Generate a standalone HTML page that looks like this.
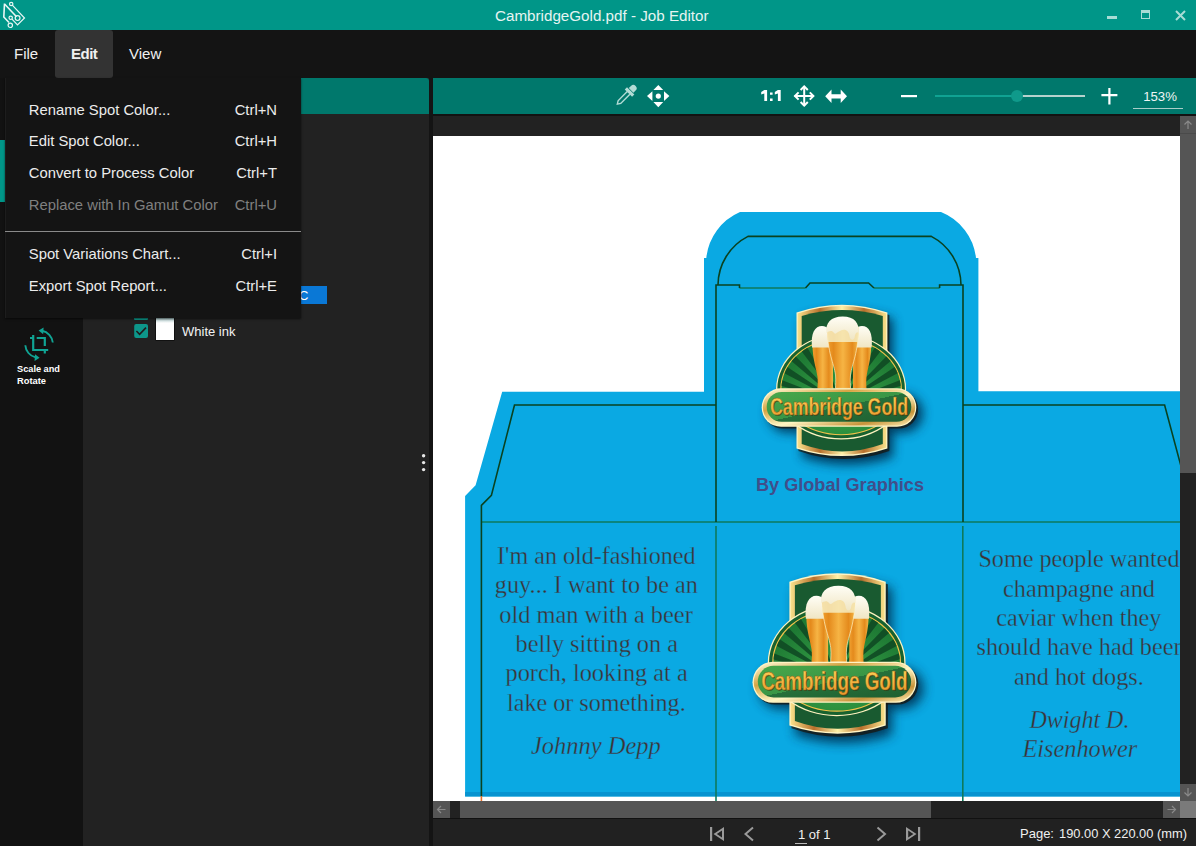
<!DOCTYPE html>
<html><head><meta charset="utf-8">
<style>
*{margin:0;padding:0;box-sizing:border-box}
html,body{width:1196px;height:846px;overflow:hidden;background:#141414;font-family:"Liberation Sans",sans-serif}
.a{position:absolute}
#title{left:0;top:0;width:1196px;height:30px;background:#009688}
#ttext{left:495px;top:0.7px;white-space:nowrap;color:#e6f4f2;font-size:15.2px;line-height:30px}
#menubar{left:0;top:30px;width:1196px;height:48px;background:#141414}
.mi{color:#f0f0f0;font-size:15px;top:30px;line-height:47px}
#editbtn{left:55px;top:30px;width:58px;height:48px;background:#333;border-radius:3px}
#rail{left:0;top:78px;width:83px;height:768px;background:#121212}
#panel{left:83px;top:78px;width:346px;height:768px;background:#222}
#phead{left:83px;top:78px;width:346px;height:36px;background:#00786c;border-top-right-radius:3px}
#divider{left:429px;top:78px;width:4px;height:768px;background:#141414}
#tbar{left:433px;top:78px;width:763px;height:36px;background:#00786c}
#canvas{left:433px;top:114px;width:763px;height:704px;background:#222;border-top:2px solid #121212}
#status{left:433px;top:818px;width:763px;height:28px;background:#212121;border-top:1px solid #111}
#page{left:433px;top:136px;width:747px;height:665px;background:#fff;overflow:hidden}
#dd{left:5px;top:78px;width:296px;height:240px;background:#141414;border-left:1px solid #1d1d1d;box-shadow:0 1px 2px rgba(0,0,0,.6)}
.it{left:22.8px;font-size:14.8px;line-height:17px;color:#ececec;white-space:nowrap}
.sc{right:24px;font-size:14.8px;line-height:17px;color:#ececec;white-space:nowrap}
.dis{color:#808080}
</style></head><body>
<div class="a" id="title"></div>
<div class="a" id="ttext">CambridgeGold.pdf - Job Editor</div>
<div class="a" id="menubar"></div>
<div class="a" id="editbtn"></div>
<div class="a mi" style="left:14px">File</div>
<div class="a mi" style="left:71px;font-weight:bold;letter-spacing:-0.5px">Edit</div>
<div class="a mi" style="left:129px">View</div>
<div class="a" id="rail"></div>
<div class="a" style="left:0;top:140px;width:5px;height:62px;background:#009688"></div>
<div class="a" id="panel"></div>
<div class="a" id="phead"></div>
<div class="a" id="divider"></div>
<div class="a" id="tbar"></div>
<div class="a" id="canvas"></div>

<svg class="a" style="left:433px;top:136px" width="747" height="665" viewBox="433 136 747 665">
  <defs>
    <linearGradient id="gold" x1="0" y1="0" x2="1" y2="1">
      <stop offset="0" stop-color="#fffbd8"/><stop offset="0.3" stop-color="#d7a443"/><stop offset="0.55" stop-color="#fff6c4"/><stop offset="0.8" stop-color="#c8943a"/><stop offset="1" stop-color="#fff0b8"/>
    </linearGradient>
    <linearGradient id="bgreen" x1="0" y1="0" x2="1" y2="1">
      <stop offset="0" stop-color="#48a84a"/><stop offset="0.5" stop-color="#3a9646"/><stop offset="0.5" stop-color="#26703a"/><stop offset="1" stop-color="#1f5e30"/>
    </linearGradient>
    <linearGradient id="beer" x1="0" y1="0" x2="1" y2="0">
      <stop offset="0" stop-color="#f0a030"/><stop offset="0.2" stop-color="#e48a1c"/><stop offset="0.5" stop-color="#f6b444"/><stop offset="0.8" stop-color="#e48a1c"/><stop offset="1" stop-color="#f4b848"/>
    </linearGradient>
    <linearGradient id="foam" x1="0" y1="0" x2="0" y2="1">
      <stop offset="0" stop-color="#fffef6"/><stop offset="1" stop-color="#f0e6c4"/>
    </linearGradient>
    <linearGradient id="fgold" x1="0" y1="0" x2="1" y2="0"><stop offset="0" stop-color="#f8e08a"/><stop offset="0.25" stop-color="#b8702c"/><stop offset="0.5" stop-color="#fff2a8"/><stop offset="0.75" stop-color="#b8702c"/><stop offset="1" stop-color="#f8e08a"/></linearGradient>
    <linearGradient id="tgold" x1="0" y1="0" x2="0" y2="1"><stop offset="0" stop-color="#ffd45a"/><stop offset="1" stop-color="#e8962a"/></linearGradient>
    <radialGradient id="rays" cx="0.5" cy="0.7" r="0.6">
      <stop offset="0" stop-color="#3aa548"/><stop offset="1" stop-color="#1e7a34"/>
    </radialGradient>
    <filter id="blur" x="-30%" y="-30%" width="160%" height="160%"><feGaussianBlur stdDeviation="5.5"/></filter>
    <clipPath id="ellc"><ellipse cx="86.1" cy="94" rx="62" ry="41.7"/></clipPath>
    <symbol id="logo" overflow="visible">
      <g filter="url(#blur)" fill="#023456" opacity="0.95">
        <path d="M47,24 Q92,9 138,24 V162 Q92,177 47,162 Z"/>
        <rect x="13" y="99" width="154.8" height="38.6" rx="19.3"/>
      </g>
      <path d="M43.5,20 Q88.8,6.5 134.4,20 V156 Q88.8,172 43.5,156 Z" fill="#1a1208" opacity="0.7"/>
      <rect x="8.5" y="95" width="154.6" height="38.6" rx="19.3" fill="#1a1208" opacity="0.7"/>
      <path d="M41.5,17.6 Q86.8,1.8 132.4,17.6 V153.4 Q86.8,168.6 41.5,153.4 Z" fill="#fff4c4"/>
      <path d="M42.7,18.6 Q86.8,3.6 131.2,18.6 V152.4 Q86.8,166.8 42.7,152.4 Z" fill="url(#fgold)"/>
      <path d="M46.7,21 Q87,9.2 127.8,21 V149 Q87,163.8 46.7,149 Z" fill="#195a30"/>
      <path d="M21.10,94 A65.00 55.00 0 0 1 151.10,94 A65.00 50.50 0 0 1 21.10,94 Z" fill="#fff3c0"/>
      <path d="M22.30,94 A63.80 53.80 0 0 1 149.90,94 A63.80 49.30 0 0 1 22.30,94 Z" fill="#17622f"/>
      <path d="M25.30,94 A60.80 50.80 0 0 1 146.90,94 A60.80 46.30 0 0 1 25.30,94 Z" fill="#f2c24a"/>
      <path d="M26.40,94 A59.70 49.70 0 0 1 145.80,94 A59.70 45.20 0 0 1 26.40,94 Z" fill="url(#rays)"/>
      <clipPath id="ellc2"><path d="M26.40,94 A59.70 49.70 0 0 1 145.80,94 A59.70 45.20 0 0 1 26.40,94 Z"/></clipPath>
      <g clip-path="url(#ellc2)" fill="#0f4a24" opacity="0.9">
        <path d="M86,108 L6,66 L10,57z M86,108 L14,47 L20,40z M86,108 L28,32 L36,26z M86,108 L44,20 L53,17z M86,108 L119,17 L128,20z M86,108 L136,26 L144,32z M86,108 L152,40 L158,47z M86,108 L162,57 L166,66z M86,108 L2,84 L3,76z M86,108 L169,76 L170,84z"/>
      </g>
      <g>
        <path d="M57.5,50 C57.5,64 61.5,74 62.5,82 C63,88 62.5,91 62.5,93.4 H78 V50 Z" fill="url(#beer)"/>
        <path d="M57,52.5 C55.5,38 60,31 67,31 C73,31 77,36 77,45 L77,52.5 Z" fill="url(#foam)"/>
        <path d="M98,50 H116.2 C116.2,64 112.5,74 111.5,82 C111,88 111.5,91 111.5,93.4 H98 Z" fill="url(#beer)"/>
        <path d="M98,45 C98,36 101,31 107,31 C114,31 118,38 116.6,52.5 H98 Z" fill="url(#foam)"/>
        <path d="M72.3,32 C72.3,58 79,68 80.5,80 C81,86 80.5,90 80.5,93.4 H95.5 C95.5,90 95,86 95.5,80 C97,68 103.5,58 103.5,32 Z" fill="url(#beer)" stroke="#fff4c8" stroke-width="0.8" stroke-opacity="0.8"/>
        <path d="M72.6,32 H103.2 V47 H72.6z" fill="#f6ecc0" opacity="0.85"/>
        <path d="M71.5,38 C70,28 76,21.4 87.7,21.4 C99.5,21.4 104.5,28 103.8,38 C102,36 100,38 99.5,43 C98,46 95,45 94.5,41 C94,36 90,33 85,36 C82,37 81,40 79,38 C77,35 74,36 71.5,38 Z" fill="url(#foam)"/>
      </g>
      <rect x="6.7" y="93.2" width="154.6" height="38.6" rx="19.3" fill="#fff4c4"/>
      <rect x="7.9" y="94.4" width="152.2" height="36.2" rx="18.1" fill="url(#gold)"/>
      <rect x="11.7" y="97" width="144.6" height="29.8" rx="14.9" fill="url(#bgreen)"/>
      <text x="16" y="121" textLength="138" lengthAdjust="spacingAndGlyphs" font-family="Liberation Sans" font-weight="bold" font-size="23.5" fill="#3a2a08" opacity="0.55">Cambridge Gold</text>
      <text x="15" y="120" textLength="138" lengthAdjust="spacingAndGlyphs" font-family="Liberation Sans" font-weight="bold" font-size="23.5" fill="url(#tgold)" stroke="#8a5a14" stroke-width="0.35">Cambridge Gold</text>
    </symbol>
  </defs>
  <rect x="433" y="136" width="747" height="665" fill="#fff"/>
  <!-- blue box -->
  <path d="M465.1,796.4 V496 L475.6,485.2 L502.2,391.8 H704 V258 H706.3 A56 56 0 0 1 740 212 H941 A56 56 0 0 1 976 258 H978.4 V391.3 H1190 V796.4 Z" fill="#0aa9e3"/>
  <rect x="465.1" y="792" width="730" height="4.4" fill="#0793d0"/>
  <!-- dielines -->
  <g fill="none" stroke-width="1.6">
    <g stroke="#0e7a5c">
      <path d="M481.4,522 H1190"/>
      <path d="M716,526 V801 M962.8,526 V801"/>
      <path d="M739.5,288 H805.5 M874,288 H939.6"/>
    </g>
    <g stroke="#0a4220">
      <path d="M718,285 A55 55 0 0 1 748,236.4 H931.3 A55 55 0 0 1 961,285"/>
      <path d="M716,522 V285 H739.5 V288 M805.5,288 L810,283 H868.6 L874,288 M939.6,288 V285 H963 V522"/>
      <path d="M716,405 H514.5 L491.4,495.4 L481.4,505.4 V796"/>
      <path d="M963,405 H1164.6 L1182,470"/>
    </g>
    <path d="M481.4,796 V801" stroke="#e8702a"/>
  </g>
  <use href="#logo" x="0" y="0" transform="translate(755,295)"/>
  <use href="#logo" x="0" y="0" transform="translate(745.4,563) scale(1.06)"/>
  <text x="756" y="491.4" textLength="168" lengthAdjust="spacingAndGlyphs" font-family="Liberation Sans" font-weight="bold" font-size="18.5" fill="#414e8a">By Global Graphics</text>
  <g font-family="Liberation Serif" font-size="24.8" fill="#3d3432" stroke="#0aa9e3" stroke-width="0.3" transform="translate(0,0.8)">
    <text x="497" y="563.4" textLength="198.6" lengthAdjust="spacingAndGlyphs">I'm an old-fashioned</text>
    <text x="494.8" y="592.7" textLength="203.1" lengthAdjust="spacingAndGlyphs">guy... I want to be an</text>
    <text x="499.3" y="622" textLength="193.5" lengthAdjust="spacingAndGlyphs">old man with a beer</text>
    <text x="515.5" y="651.3" textLength="162.5" lengthAdjust="spacingAndGlyphs">belly sitting on a</text>
    <text x="505.5" y="680.6" textLength="182.2" lengthAdjust="spacingAndGlyphs">porch, looking at a</text>
    <text x="507" y="709.9" textLength="178.7" lengthAdjust="spacingAndGlyphs">lake or something.</text>
    <text x="531" y="753.4" textLength="129.7" lengthAdjust="spacingAndGlyphs" font-style="italic">Johnny Depp</text>
    <text x="978.4" y="566.2" textLength="201.2" lengthAdjust="spacingAndGlyphs">Some people wanted</text>
    <text x="1003" y="596" textLength="152" lengthAdjust="spacingAndGlyphs">champagne and</text>
    <text x="996.3" y="625" textLength="165.1" lengthAdjust="spacingAndGlyphs">caviar when they</text>
    <text x="976.5" y="654.5" textLength="205" lengthAdjust="spacingAndGlyphs">should have had beer</text>
    <text x="1014" y="684" textLength="129.8" lengthAdjust="spacingAndGlyphs">and hot dogs.</text>
    <text x="1029.5" y="727.3" textLength="99.9" lengthAdjust="spacingAndGlyphs" font-style="italic">Dwight D.</text>
    <text x="1022.4" y="756.3" textLength="114.9" lengthAdjust="spacingAndGlyphs" font-style="italic">Eisenhower</text>
  </g>
</svg>

<div class="a" id="status"></div>

<svg class="a" style="left:0;top:0" width="1196" height="846" viewBox="0 0 1196 846">
  <!-- title bar window controls -->
  <g fill="#a8dcd5">
    <rect x="1107" y="16" width="10" height="3"/>
    <path d="M1141 10h9v9h-9z M1142 13h7v5h-7z" fill-rule="evenodd"/>
  </g>
  <path d="M1176 11L1185 20M1185 11L1176 20" stroke="#a8dcd5" stroke-width="2"/>
  <!-- app logo -->
  <g fill="none" stroke="#e8f6f4" stroke-width="1.2">
    <path d="M4.5 3.5 L3.8 17 L9 22.5" stroke-width="1.6"/>
    <path d="M4.8 4.2 L16.5 16.8" stroke-width="1.6"/>
    <circle cx="11.2" cy="4" r="1.7"/>
    <path d="M12.3 5.2 L24.5 18 L17.5 25 L12 19.2"/>
    <circle cx="10.7" cy="17.8" r="1.7"/>
    <circle cx="17.6" cy="18.1" r="2.4"/>
    <circle cx="10.3" cy="25.3" r="2.2"/>
  </g>
  <!-- eyedropper -->
  <g transform="translate(626,95.5) rotate(45)" fill="#b3dcd6">
    <path d="M-3.3 -7.2 V-10.3 A3.3 3.3 0 0 1 3.3 -10.3 V-7.2z"/>
    <rect x="-5.2" y="-6.6" width="10.4" height="3.2"/>
    <path d="M-2.6 -3.6 H2.6 V9.5 L0 13.6 L-2.6 9.5z M-1.2 -3.6 H1.2 V9 L0 11 L-1.2 9z" fill-rule="evenodd"/>
  </g>
  <g fill="#fff">
    <path d="M658.3 85 L663.2 90 L653.4 90z M658.3 107.2 L663.2 102 L653.4 102z M647 96.1 L652.4 91.2 L652.4 101z M669.4 96.1 L664 91.2 L664 101z"/>
    <circle cx="658.3" cy="96.1" r="2.6"/>
  </g>
  <path d="M764.3,90 H767.1 V101 H764.3 V93.4 L761.2,94.6 V92.1z M777.9,90 H780.7 V101 H777.9 V93.4 L774.8,94.6 V92.1z M770,92.4 h2.6 v2.4 h-2.6z M770,98.6 h2.6 v2.4 h-2.6z" fill="#fff"/>
  <g stroke="#fff" stroke-width="2" fill="none" stroke-linecap="butt">
    <path d="M804.2 86.5 V106 M794.5 96 H814"/>
    <path d="M800.6 90 L804.2 86.4 L807.8 90 M800.6 102 L804.2 105.6 L807.8 102 M798.6 92.4 L795 96 L798.6 99.6 M809.8 92.4 L813.4 96 L809.8 99.6"/>
  </g>
  <path d="M825.2 96.3 L831.5 89.6 V94.2 H840.7 V89.6 L847 96.3 L840.7 103 V98.4 H831.5 V103z" fill="#fff"/>
  <rect x="901" y="95" width="16" height="2.2" fill="#fff"/>
  <rect x="935" y="95" width="82" height="2" fill="#10a393"/>
  <rect x="1017" y="95" width="68" height="2" fill="#b5d2cd"/>
  <circle cx="1017" cy="96" r="6" fill="#0f9a8b"/>
  <path d="M1101.4 95.2 H1117.4 M1109.4 88 V104.4" stroke="#fff" stroke-width="2.2"/>
  <text x="1143.2" y="101.4" fill="#eef5f4" font-family="Liberation Sans" font-size="13.2">153%</text>
  <rect x="1133" y="108" width="50" height="1" fill="#a9cdc8"/>
</svg>

<svg class="a" style="left:0;top:0" width="1196" height="846" viewBox="0 0 1196 846">
  <!-- panel dots -->
  <g fill="#e8e8e8"><circle cx="423.6" cy="455.7" r="1.7"/><circle cx="423.6" cy="462.6" r="1.7"/><circle cx="423.6" cy="469.6" r="1.7"/></g>
  <!-- highlighted spot row remnant -->
  <rect x="300" y="286" width="27" height="18" fill="#0a78d6"/>
  <text x="299" y="299.5" fill="#fff" font-family="Liberation Sans" font-size="13">C</text>
  <rect x="134" y="317" width="14" height="3" rx="1" fill="#0d978a"/>
  <rect x="134.2" y="323.9" width="13.8" height="14" rx="2" fill="#0d978a"/>
  <path d="M136.4 331 L139.6 334.4 L146 327.6" stroke="#1e1e1e" stroke-width="1.6" fill="none"/>
  <rect x="155.5" y="317.5" width="19" height="23" fill="#000"/>
  <rect x="156" y="318" width="18" height="22" fill="#fff"/>
  <defs><linearGradient id="sg" x1="0" y1="0" x2="0" y2="1"><stop offset="0" stop-color="#9fbfc0"/><stop offset="1" stop-color="#fff"/></linearGradient></defs>
  <rect x="156" y="318" width="18" height="5" fill="url(#sg)"/>
  <text x="182" y="335.5" fill="#f2f2f2" font-family="Liberation Sans" font-size="13">White ink</text>
  <!-- scale & rotate icon -->
  <g stroke="#10a494" stroke-width="2.2" fill="none">
    <path d="M30 338 H34 M33.2 335 V350 H48.2 M36.7 338 H44.8 V346 M44.8 350 V353.5"/>
    <path d="M42 330.8 A13.5 13.5 0 0 1 52.8 342.5" stroke-width="1.9"/>
    <path d="M25.3 345.3 A13.5 13.5 0 0 0 35.5 357.4" stroke-width="1.9"/>
  </g>
  <g fill="#10a494">
    <path d="M38.6 330.6 L43.6 327.4 L43.2 334.2z"/>
    <path d="M39.6 357.8 L34.6 361 L35 354.2z"/>
  </g>
  <text font-family="Liberation Sans" font-weight="bold" font-size="9.6" fill="#fff"><tspan x="17" y="371.6" textLength="43" lengthAdjust="spacingAndGlyphs">Scale and</tspan><tspan x="17" y="384" textLength="29" lengthAdjust="spacingAndGlyphs">Rotate</tspan></text>
  <!-- scrollbars -->
  <rect x="1180" y="116" width="16" height="17" fill="#555"/>
  <path d="M1188 129 V121 M1184.5 124.5 L1188 121 L1191.5 124.5" stroke="#8a8a8a" stroke-width="1.2" fill="none"/>
  <rect x="1180" y="133" width="16" height="340" fill="#555"/><rect x="1180" y="133" width="16" height="1" fill="#4a4a4a"/>
  <rect x="1180" y="784" width="16" height="17" fill="#555"/>
  <path d="M1188 788 V796 M1184.5 792.5 L1188 796 L1191.5 792.5" stroke="#8a8a8a" stroke-width="1.2" fill="none"/>
  <rect x="433" y="801" width="763" height="17" fill="#222"/>
  <rect x="433" y="801" width="17" height="17" fill="#555"/>
  <path d="M437.5 809.5 H445.5 M441 806 L437.5 809.5 L441 813" stroke="#8a8a8a" stroke-width="1.2" fill="none"/>
  <rect x="460" y="801" width="471" height="17" fill="#555"/>
  <rect x="1163" y="801" width="17" height="17" fill="#555"/>
  <path d="M1167.5 809.5 H1175.5 M1172 806 L1175.5 809.5 L1172 813" stroke="#8a8a8a" stroke-width="1.2" fill="none"/>
  <rect x="1180" y="801" width="16" height="17" fill="#7a7a7a"/>
  <rect x="433" y="818" width="763" height="1" fill="#111"/>
  <!-- status bar -->
  <g fill="#9a9a9a">
    <rect x="710" y="827" width="2.2" height="14"/>
    <path d="M713.5 834 L724 827 V841z M716.8 834 L722 830.6 V837.4z" fill-rule="evenodd"/>
    <path d="M906 827 L916.5 834 L906 841z M908.2 830.6 L913.4 834 L908.2 837.4z" fill-rule="evenodd"/>
    <rect x="918" y="827" width="2.2" height="14"/>
  </g>
  <path d="M753 827.5 L745.5 834 L753 840.5 M877.5 827.5 L885 834 L877.5 840.5" stroke="#9a9a9a" stroke-width="2" fill="none"/>
  <text x="798" y="839" fill="#f0f0f0" font-family="Liberation Sans" font-size="13">1 of 1</text>
  <rect x="795" y="843" width="12" height="1" fill="#bbb"/>
  <text x="1020" y="837.9" fill="#f0f0f0" font-family="Liberation Sans" font-size="13">Page:</text><text x="1059" y="837.9" textLength="128" lengthAdjust="spacingAndGlyphs" fill="#f0f0f0" font-family="Liberation Sans" font-size="13">190.00 X 220.00 (mm)</text>
</svg>
<div class="a" id="dd">
  <div class="a it" style="top:23.6px">Rename Spot Color...</div><div class="a sc" style="top:23.6px">Ctrl+N</div>
  <div class="a it" style="top:55.4px">Edit Spot Color...</div><div class="a sc" style="top:55.4px">Ctrl+H</div>
  <div class="a it" style="top:87.1px">Convert to Process Color</div><div class="a sc" style="top:87.1px">Ctrl+T</div>
  <div class="a it dis" style="top:119.1px">Replace with In Gamut Color</div><div class="a sc dis" style="top:119.1px">Ctrl+U</div>
  <div class="a" style="left:-1px;top:153px;width:296px;height:1px;background:#8a8a8a"></div>
  <div class="a it" style="top:167.6px">Spot Variations Chart...</div><div class="a sc" style="top:167.6px">Ctrl+I</div>
  <div class="a it" style="top:199.6px">Export Spot Report...</div><div class="a sc" style="top:199.6px">Ctrl+E</div>
</div>
</body></html>
